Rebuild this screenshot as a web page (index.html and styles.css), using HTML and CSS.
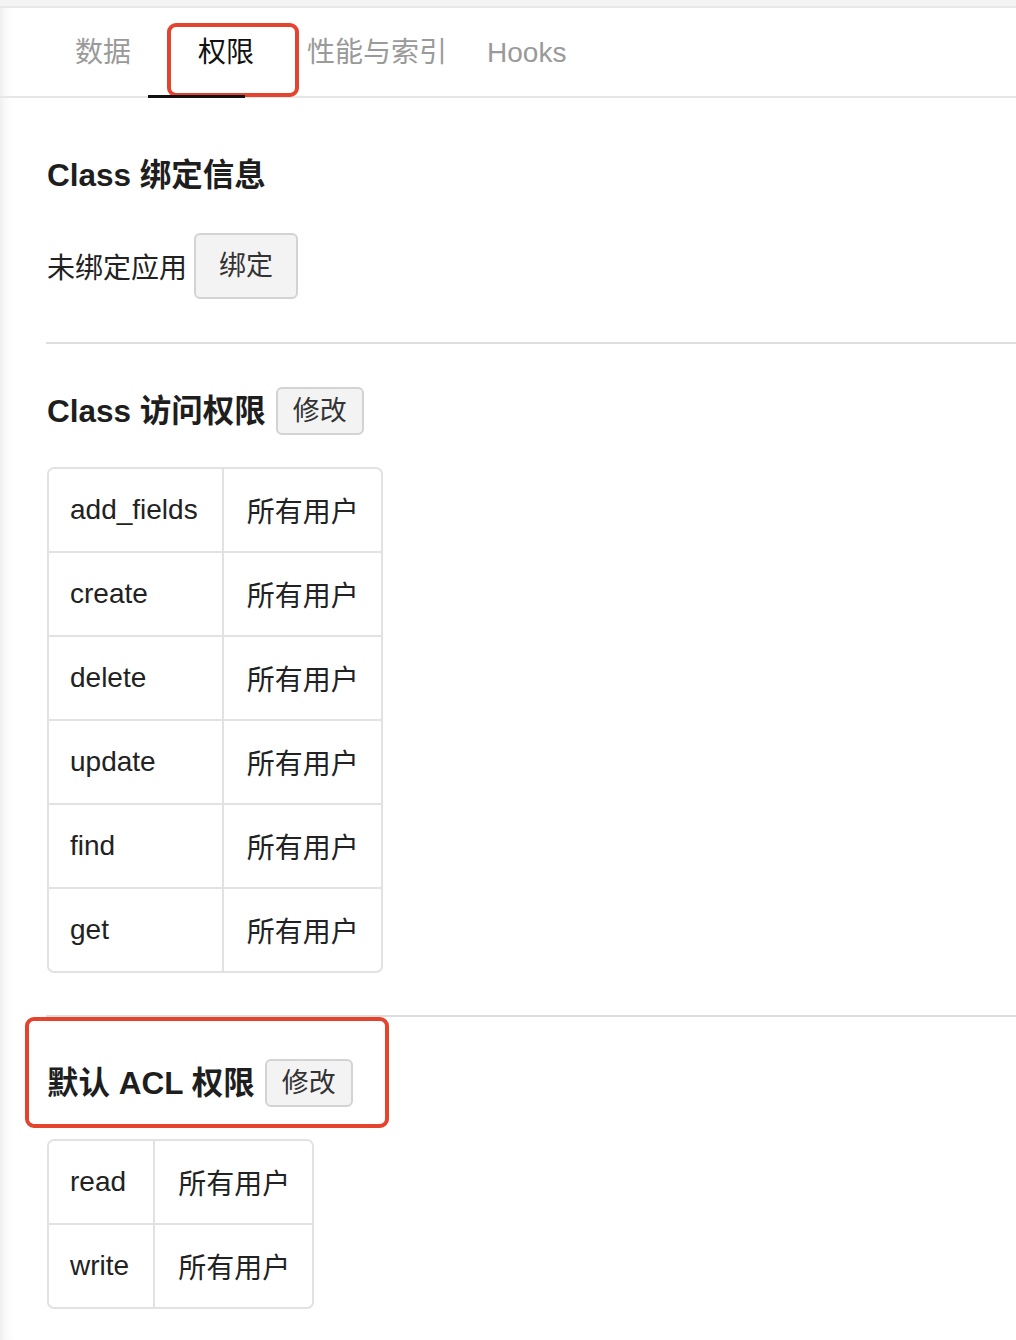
FILE: index.html
```html
<!DOCTYPE html>
<html lang="zh-CN">
<head>
<meta charset="utf-8">
<title>权限</title>
<link rel="stylesheet" href="styles.css">
</head>
<body>
<div class="topstrip"></div>
<div class="page">
  <nav class="tabs">
    <span class="tab tab-data">数据</span>
    <span class="tab tab-perm active">权限<span class="mark mark-tab"></span></span>
    <span class="tab tab-perf">性能与索引</span>
    <span class="tab tab-hooks">Hooks</span>
    <span class="ink"></span>
  </nav>

  <main class="content">
    <section class="section first">
      <h2 class="heading">Class 绑定信息</h2>
      <div class="bind-row">
        <span class="label">未绑定应用</span>
        <button class="btn btn-large">绑定</button>
      </div>
    </section>

    <section class="section">
      <div class="head-row">
        <h2 class="heading">Class 访问权限</h2>
        <button class="btn">修改</button>
      </div>
      <table class="perm-table">
        <tr><td>add_fields</td><td>所有用户</td></tr>
        <tr><td>create</td><td>所有用户</td></tr>
        <tr><td>delete</td><td>所有用户</td></tr>
        <tr><td>update</td><td>所有用户</td></tr>
        <tr><td>find</td><td>所有用户</td></tr>
        <tr><td>get</td><td>所有用户</td></tr>
      </table>
    </section>

    <section class="section acl">
      <span class="mark mark-acl"></span>
      <div class="head-row">
        <h2 class="heading">默认 ACL 权限</h2>
        <button class="btn">修改</button>
      </div>
      <table class="perm-table">
        <tr><td>read</td><td>所有用户</td></tr>
        <tr><td>write</td><td>所有用户</td></tr>
      </table>
    </section>
  </main>
</div>
</body>
</html>
```

FILE: styles.css
```css
html, body {
  margin: 0;
  padding: 0;
  background: #ffffff;
}

body {
  font-family: "Liberation Sans", "Noto Sans CJK SC", sans-serif;
  color: #222222;
  height: 1340px;
  overflow: hidden;
}

.topstrip {
  height: 6px;
  background: #f4f4f4;
  border-bottom: 2px solid #e8e8e8;
}

.page {
  background: linear-gradient(to right, #f0f0f0 0px, #fafafa 6px, #ffffff 14px);
  min-height: 1332px;
}

.tabs {
  position: relative;
  display: flex;
  align-items: center;
  height: 88px;
  border-bottom: 2px solid #e6e6e6;
  font-size: 28px;
}

.tab {
  position: relative;
  color: #9a9a9a;
  line-height: 40px;
  top: 1px;
}

.tab-data { margin-left: 75px; }
.tab-perm { margin-left: 67px; color: #111111; }
.tab-perf { margin-left: 53px; }
.tab-hooks { margin-left: 40px; }

.ink {
  position: absolute;
  left: 148px;
  width: 97px;
  bottom: -2px;
  height: 3px;
  background: #111111;
}

.mark {
  position: absolute;
  border: 4px solid #e4432d;
  border-radius: 9px;
  box-sizing: border-box;
  pointer-events: none;
}

.mark-tab {
  left: -31px;
  top: -10px;
  width: 132px;
  height: 74px;
}

.content {
  padding-left: 46px;
}

.section {
  position: relative;
  border-top: 2px solid #dedede;
  padding: 43px 0 42px 1px;
}

.section.first {
  border-top: none;
  padding-top: 57px;
  padding-bottom: 43px;
}

.heading {
  margin: 0;
  font-size: 31.5px;
  font-weight: bold;
  line-height: 40px;
  color: #1e1e1e;
}

.bind-row {
  display: flex;
  align-items: center;
  margin-top: 38px;
}

.label {
  font-size: 28px;
  color: #222222;
}

.btn {
  font-family: "Liberation Sans", "Noto Sans CJK SC", sans-serif;
  font-size: 27px;
  color: #333333;
  background: #f3f3f3;
  border: 2px solid #d3d3d3;
  border-radius: 6px;
  height: 48px;
  padding: 0 15px;
  line-height: 44px;
  margin-left: 10px;
}

.btn-large {
  height: 66px;
  padding: 0 23px;
  margin-left: 7px;
}

.head-row {
  display: flex;
  align-items: center;
}

.perm-table {
  margin-top: 32px;
  border-collapse: separate;
  border-spacing: 0;
  border: 2px solid #e2e2e2;
  border-radius: 7px;
  font-size: 28px;
  color: #222222;
}

.perm-table td {
  height: 82px;
  padding: 0 24px 0 21px;
  border-bottom: 2px solid #e2e2e2;
  white-space: nowrap;
}

.perm-table td:first-child {
  border-right: 2px solid #e2e2e2;
}

.perm-table td:last-child {
  padding-left: 23px;
  padding-right: 22px;
}

.perm-table tr:last-child td {
  border-bottom: none;
}

.acl {
  padding-top: 42px;
}

.mark-acl {
  left: -21px;
  top: 0;
  width: 364px;
  height: 111px;
}
```
